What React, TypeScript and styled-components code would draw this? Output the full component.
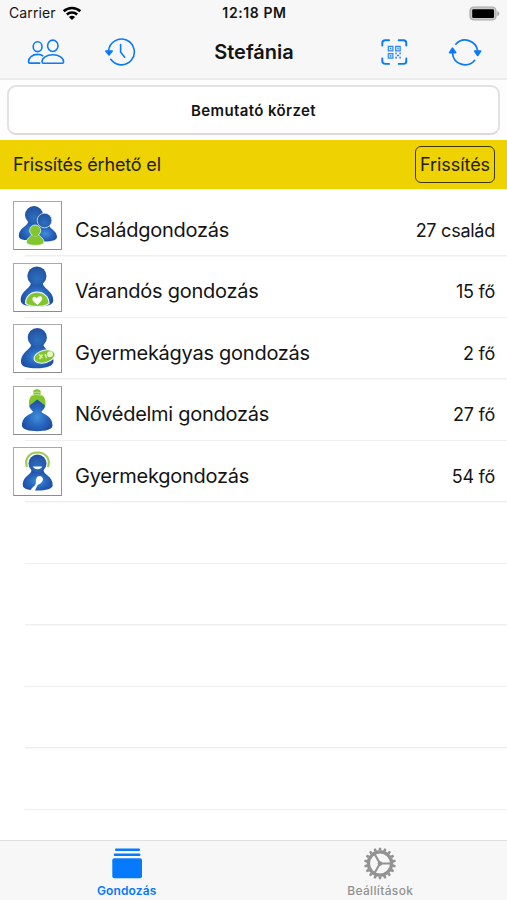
import React from "react";
import styled, { createGlobalStyle } from "styled-components";

const GlobalStyle = createGlobalStyle`
  * { box-sizing: border-box; }
  body { margin: 0; background: #fff; }
`;

const BLUE = "#0a7bf5";

const Screen = styled.div`
  width: 507px;
  height: 900px;
  display: flex;
  flex-direction: column;
  overflow: hidden;
  background: #fff;
  color: #141414;
  font-family: Inter, "Liberation Sans", sans-serif;
`;

const Text = styled.span<{ $size: number; $weight?: number; $spacing?: number }>`
  font-size: ${(p) => p.$size}px;
  font-weight: ${(p) => p.$weight ?? 400};
  letter-spacing: ${(p) => p.$spacing ?? 0}px;
  line-height: 1.2;
  white-space: nowrap;
`;

const Header = styled.header`
  height: 80px;
  flex: none;
  background: #f7f7f7;
  border-bottom: 2px solid #ebebec;
`;

const StatusBar = styled.div`
  height: 27px;
  padding: 0 7px 0 9px;
  display: grid;
  grid-template-columns: 1fr auto 1fr;
  align-items: center;
`;

const StatusSide = styled.div<{ $end?: boolean }>`
  display: flex;
  align-items: center;
  gap: 6px;
  justify-content: ${(p) => (p.$end ? "flex-end" : "flex-start")};
`;

const NavBar = styled.nav`
  height: 51px;
  padding: 0 25px 2px 26px;
  display: grid;
  grid-template-columns: 1fr auto 1fr;
  align-items: center;
`;

const NavGroup = styled.div<{ $end?: boolean }>`
  display: flex;
  gap: 38px;
  justify-content: ${(p) => (p.$end ? "flex-end" : "flex-start")};
`;

const IconButton = styled.button`
  display: flex;
  padding: 0;
  border: 0;
  background: none;
  color: ${BLUE};
`;

const DistrictArea = styled.div`
  height: 60px;
  flex: none;
  padding: 5px 7px 5px;
  background: #fdfdfd;
`;

const DistrictButton = styled.button`
  width: 100%;
  height: 50px;
  padding: 1px 0 0;
  border: 2px solid #e2e2e4;
  border-bottom-color: #dadadc;
  border-radius: 9px;
  background: #fff;
  color: inherit;
  font-family: inherit;
`;

const Banner = styled.div`
  height: 49px;
  flex: none;
  padding: 0 12px 0 13px;
  display: flex;
  align-items: center;
  justify-content: space-between;
  background: #eed202;
  color: #221e03;
`;

const UpdateButton = styled.button`
  width: 80px;
  height: 37px;
  padding: 0;
  display: flex;
  align-items: center;
  justify-content: center;
  border: 1.5px solid #3c3500;
  border-radius: 6px;
  background: none;
  color: inherit;
  font-family: inherit;
`;

const List = styled.main`
  flex: 1;
  padding-top: 6px;
  overflow: hidden;
`;

const Row = styled.div`
  height: 61.5px;
  padding: 6px 12px 0 13px;
  display: flex;
  align-items: flex-start;
  background: linear-gradient(#efeff1, #efeff1) 25px 100% / 100% 1.5px no-repeat;
`;

const Thumb = styled.div`
  width: 49px;
  height: 49px;
  margin-right: 13px;
  border: 1px solid #a9a9ab;
  border-right-color: #959595;
  border-bottom-color: #8c8c8c;
  background: #fff;
`;

const RowLabels = styled.div`
  flex: 1;
  height: 57px;
  display: flex;
  align-items: center;
  justify-content: space-between;
`;

const Count = styled(Text)`
  padding-top: 2px;
`;

const TabBar = styled.footer`
  height: 60px;
  flex: none;
  display: grid;
  grid-template-columns: 1fr 1fr;
  border-top: 1.5px solid #dfdfe0;
  background: #f7f7f7;
`;

const Tab = styled.div<{ $active?: boolean }>`
  display: flex;
  flex-direction: column;
  align-items: center;
  justify-content: space-between;
  padding: 5px 0 2px;
  color: ${(p) => (p.$active ? "#057afa" : "#929292")};
`;

const WifiIcon = () => (
  <svg width="20" height="15" viewBox="0 0 20 15" fill="none" stroke="#000">
    <path d="M1.7 5.2C6.4.9 13.6.9 18.3 5.2" strokeWidth="2.6" />
    <path d="M4.8 8.5c3-2.7 7.4-2.7 10.4 0" strokeWidth="2.5" />
    <path d="M10 14 6.9 10.900c1.800-1.500 4.400-1.500 6.200 0z" fill="#000" stroke="none" />
  </svg>
);

const BatteryIcon = () => (
  <svg width="31" height="15" viewBox="0 0 31 15">
    <rect x="1" y="1" width="26" height="13" rx="3.8" fill="#c9c9c9" stroke="#aaa" strokeWidth="1.2" />
    <rect x="3.2" y="3.2" width="21.8" height="8.8" rx="1.2" />
    <path d="M28.3 5.2c2.7.7 2.7 4 0 4.8z" fill="#aaa" />
  </svg>
);

const PeopleIcon = () => (
  <svg width="40" height="32" viewBox="0 0 40 32" fill="none" stroke="currentColor" strokeWidth="1.6" strokeLinejoin="round">
    <ellipse cx="11.6" cy="10.7" rx="4.4" ry="4.9" />
    <ellipse cx="26.8" cy="9.8" rx="5.2" ry="5.7" />
    <path d="M17.2 20c-1.5-1-3.4-1.6-5.6-1.6-5.4 0-9.1 3.2-9.1 7.3 0 1 .5 1.4 1.4 1.4h10.4" />
    <path d="M26.8 18.800c-6.4 0-10.8 3.100-10.8 7 0 1 .5 1.500 1.400 1.500h18.800c.9 0 1.400-.5 1.400-1.500 0-3.900-4.400-7-10.800-7z" />
  </svg>
);

const HistoryIcon = () => (
  <svg width="32" height="32" viewBox="0 0 32 32" fill="none" stroke="currentColor" strokeWidth="1.6" strokeLinecap="round" strokeLinejoin="round">
    <path d="M4.600 14.500A12.900 12.900 0 1 1 6.800 23.300" />
    <path d="M1.800 15h6.400l-3.200 4z" fill="currentColor" />
    <path d="M16.600 8.600v7.500l4.100 5.100" />
  </svg>
);

const ScanIcon = () => (
  <svg width="32" height="32" viewBox="0 0 32 32" fill="none" stroke="currentColor">
    <path d="M4.300 9.500V7q0-2.700 3-2.700h3.800M20.700 4.300H25.500q2.800 0 2.800 2.700v2.500M28.300 22.500V25q0 2.900-2.800 2.900h-4.800M11.100 27.900H7.300q-3 0-3-2.900V22.500" strokeWidth="1.900" strokeLinecap="round" />
    <g strokeWidth="1.200" opacity=".85">
      <path d="M10.300 10.300h4.600v4.600h-4.600zM17.600 10.300h4.600v4.600h-4.600zM10.300 17.600h4.600v4.600h-4.600z" fill="#cfe3f9" />
      <path d="M12 12.500h1.300M19.300 12.500h1.300M12 19.900h1.300" strokeWidth="1.700" />
      <path d="M17.300 17.400h1.500M21.300 17.400h1.600M18.800 19.500h2.400M17.200 21.600h1.700M21.300 21.600h1.600" strokeWidth="1.700" />
    </g>
  </svg>
);

const RefreshIcon = () => (
  <svg width="34" height="32" viewBox="0 0 34 32" fill="none" stroke="currentColor" strokeWidth="1.700" strokeLinecap="round" strokeLinejoin="round">
    <path d="M7.800 8.200A12.600 12.600 0 0 1 29.600 15" />
    <path d="M4.500 17a12.600 12.600 0 0 0 22.200 7.300" />
    <path d="M26.600 15.100h6L29.700 19.400z" fill="currentColor" />
    <path d="M1.600 16.600h6L4.500 12.200z" fill="currentColor" />
  </svg>
);

const StackIcon = () => (
  <svg width="32" height="34" viewBox="0 0 32 34" fill="currentColor">
    <rect x="4" y="2.600" width="25" height="2.500" rx="1" />
    <rect x="2.800" y="7.400" width="26.600" height="2.700" rx="1" />
    <rect x="1.300" y="12.200" width="29.700" height="20" rx="2" />
  </svg>
);

const GearIcon = () => (
  <svg width="34" height="34" viewBox="-17 -17.500 34 34" fill="none" stroke="currentColor">
    <circle r="11.600" strokeWidth="3.300" />
    {Array.from({ length: 18 }, (_, i) => (
      <path key={i} d="M-1.600-13 -1-15.800H1L1.600-13z" fill="currentColor" stroke="none" transform={`rotate(${i * 20})`} />
    ))}
    <path d="M0 0H11M0 0-5.700-9.900M0 0-5.700 9.900" strokeWidth="2.100" />
    <circle r="2.300" fill="currentColor" stroke="none" />
  </svg>
);

type Kind = "family" | "pregnant" | "postnatal" | "women" | "child";

const Figure = ({ kind }: { kind: Kind }) => {
  const body = `url(#${kind}-body)`;
  const head = `url(#${kind}-head)`;
  const green = "#83c52c";
  return (
    <svg width="47" height="47" viewBox="0 0 47 47" display="block">
      <defs>
        <radialGradient id={`${kind}-body`} cx=".5" cy=".55" r=".6">
          <stop offset="0" stopColor="#4090dc" />
          <stop offset=".5" stopColor="#2866bd" />
          <stop offset="1" stopColor="#1a469f" />
        </radialGradient>
        <radialGradient id={`${kind}-head`} cx=".5" cy=".65" r=".65">
          <stop offset="0" stopColor="#2e70c0" />
          <stop offset="1" stopColor="#21509f" />
        </radialGradient>
      </defs>
      {kind === "family" && (
        <>
          <path d="M14.500 18h11.500c0 6 7 7 7 15 0 4-6 5.500-13.500 5.500S4.800 38 4.800 34c0-9 9.700-9 9.700-16z" fill={body} />
          <circle cx="20" cy="13" r="9" fill={head} />
          <path d="M26 22h9c-.3 5 8 6 8 13 0 3-5 4.500-12 4.500S20 38 20 35c0-7 6-8 6-13z" fill={body} />
          <circle cx="30.500" cy="18.500" r="7.300" fill={head} stroke="#c5dcf5" strokeWidth=".9" />
          <g fill={green} stroke="#e6f4fb" strokeWidth=".8">
            <path d="M18 31h6.500c-.3 4 5.500 4 5.500 9.300 0 4.200-17.500 4.200-17.500 0C12.500 35 18.500 35 18 31z" />
            <circle cx="21.200" cy="28.500" r="5.500" />
            <path d="M18.600 31h5.200v3.200h-5.200z" stroke="none" />
          </g>
        </>
      )}
      {kind === "pregnant" && (
        <>
          <path d="M17 18h11.500c0 7 10.800 8 10.800 18.500 0 4.500-7 6-16.300 6S6.700 41 6.700 36.500C6.700 26 17 25 17 18z" fill={body} />
          <circle cx="22.900" cy="12" r="9.600" fill={head} />
          <path d="M11.500 39.500c0-6.500 4.700-11.300 11.500-11.300S35 33 35 39.500c-5 4-18.500 4-23.500 0z" fill={green} stroke="#e9f5ff" strokeWidth="1.200" />
          <path d="M23.500 41c-4-3-5.800-5-4.800-7.200 1-2 3.700-1.200 4.100.8 1-3 5-3.200 5.400-.6.300 2.500-2.500 4.500-4.700 7z" fill="#fff" />
        </>
      )}
      {kind === "postnatal" && (
        <>
          <path d="M17.500 18H29c0 7 10.500 8 10.500 18 0 5-7 7.300-16.500 7.300S7 42 7 37C7 26 17.500 25 17.500 18z" fill={body} />
          <circle cx="23.300" cy="12.500" r="9.600" fill={head} />
          <ellipse cx="30.500" cy="31.500" rx="10.800" ry="6.200" fill={green} stroke="#edf8ff" strokeWidth="1" transform="rotate(-16 30.500 31.500)" />
          <circle cx="36" cy="29.200" r="2.900" fill="#e8f5c9" />
          <path d="m25 29.500 3.500 3.500m0-3.500L25.500 34M31 29l1.500 4" stroke="#d5edaa" strokeWidth="1.700" fill="none" />
        </>
      )}
      {kind === "women" && (
        <>
          <path d="M15.500 20.500c-1.500-7 0-11 4.500-13.300-2-3 .2-4.900 3-4.900s5 2 3.200 4.900c5 2.300 6.200 6.300 4.900 13.300z" fill={green} />
          <path d="M17.500 8.500q5.500-2 11 0M19.500 5.800q3.700-1.500 7 0" stroke="#c8e79c" strokeWidth=".8" fill="none" />
          <path d="M23.300 12.500 31 18.500c-.2 3-1.800 4.500-3.500 6 0 2.500 11 3.500 11 14 0 4-7 5.700-15.300 5.700S8 42.500 8 38.500c0-10.500 11-11.500 11-14-1.700-1.500-3.300-3-3.500-6z" fill={body} />
        </>
      )}
      {kind === "child" && (
        <>
          <path d="M13 19C10 10 16 4.500 23.500 4.500S37 10 34 19" stroke="#9bcb55" strokeWidth="2.200" fill="none" />
          <path d="M17.500 22h12c0 5 9.200 6 9.200 15 0 4-6.700 5.500-15.200 5.500S8.700 41 8.700 37c0-9 8.800-10 8.800-15z" fill={body} />
          <circle cx="23.500" cy="15.500" r="9" fill={head} />
          <path d="M19 18.500h9c-.8 3.500-8 3.700-9 0z" fill="#fff" />
          <path d="M25.500 28c4.300 0 5.300 6-1 8.500-1.800.8-2 4-4 7l-4-.7c.5-3 5.300-5 5.400-7.800-.2-4 .7-7 3.600-7z" fill="#fff" />
        </>
      )}
    </svg>
  );
};

const rows: { kind: Kind; label: string; count: string }[] = [
  { kind: "family", label: "Családgondozás", count: "27 család" },
  { kind: "pregnant", label: "Várandós gondozás", count: "15 fő" },
  { kind: "postnatal", label: "Gyermekágyas gondozás", count: "2 fő" },
  { kind: "women", label: "Nővédelmi gondozás", count: "27 fő" },
  { kind: "child", label: "Gyermekgondozás", count: "54 fő" },
];

export default function App() {
  return (
    <Screen>
      <GlobalStyle />
      <Header>
        <StatusBar>
          <StatusSide>
            <Text $size={14} $spacing={0.1}>Carrier</Text>
            <WifiIcon />
          </StatusSide>
          <Text $size={14} $weight={600} $spacing={0.6}>12:18 PM</Text>
          <StatusSide $end>
            <BatteryIcon />
          </StatusSide>
        </StatusBar>
        <NavBar>
          <NavGroup>
            <IconButton aria-label="Családok"><PeopleIcon /></IconButton>
            <IconButton aria-label="Előzmények"><HistoryIcon /></IconButton>
          </NavGroup>
          <Text $size={20} $weight={600}>Stefánia</Text>
          <NavGroup $end>
            <IconButton aria-label="QR-kód"><ScanIcon /></IconButton>
            <IconButton aria-label="Szinkronizálás"><RefreshIcon /></IconButton>
          </NavGroup>
        </NavBar>
      </Header>
      <DistrictArea>
        <DistrictButton>
          <Text $size={15} $weight={600} $spacing={0.38}>Bemutató körzet</Text>
        </DistrictButton>
      </DistrictArea>
      <Banner>
        <Text $size={18} $spacing={-0.15}>Frissítés érhető el</Text>
        <UpdateButton>
          <Text $size={18} $spacing={-0.05}>Frissítés</Text>
        </UpdateButton>
      </Banner>
      <List>
        {rows.map((r) => (
          <Row key={r.kind}>
            <Thumb><Figure kind={r.kind} /></Thumb>
            <RowLabels>
              <Text $size={20} $spacing={-0.26}>{r.label}</Text>
              <Count $size={18} $spacing={-0.25}>{r.count}</Count>
            </RowLabels>
          </Row>
        ))}
        {Array.from({ length: 5 }, (_, i) => <Row key={i} />)}
      </List>
      <TabBar>
        <Tab $active>
          <StackIcon />
          <Text $size={12} $weight={600} $spacing={0.15}>Gondozás</Text>
        </Tab>
        <Tab>
          <GearIcon />
          <Text $size={12} $weight={500} $spacing={0.35}>Beállítások</Text>
        </Tab>
      </TabBar>
    </Screen>
  );
}
